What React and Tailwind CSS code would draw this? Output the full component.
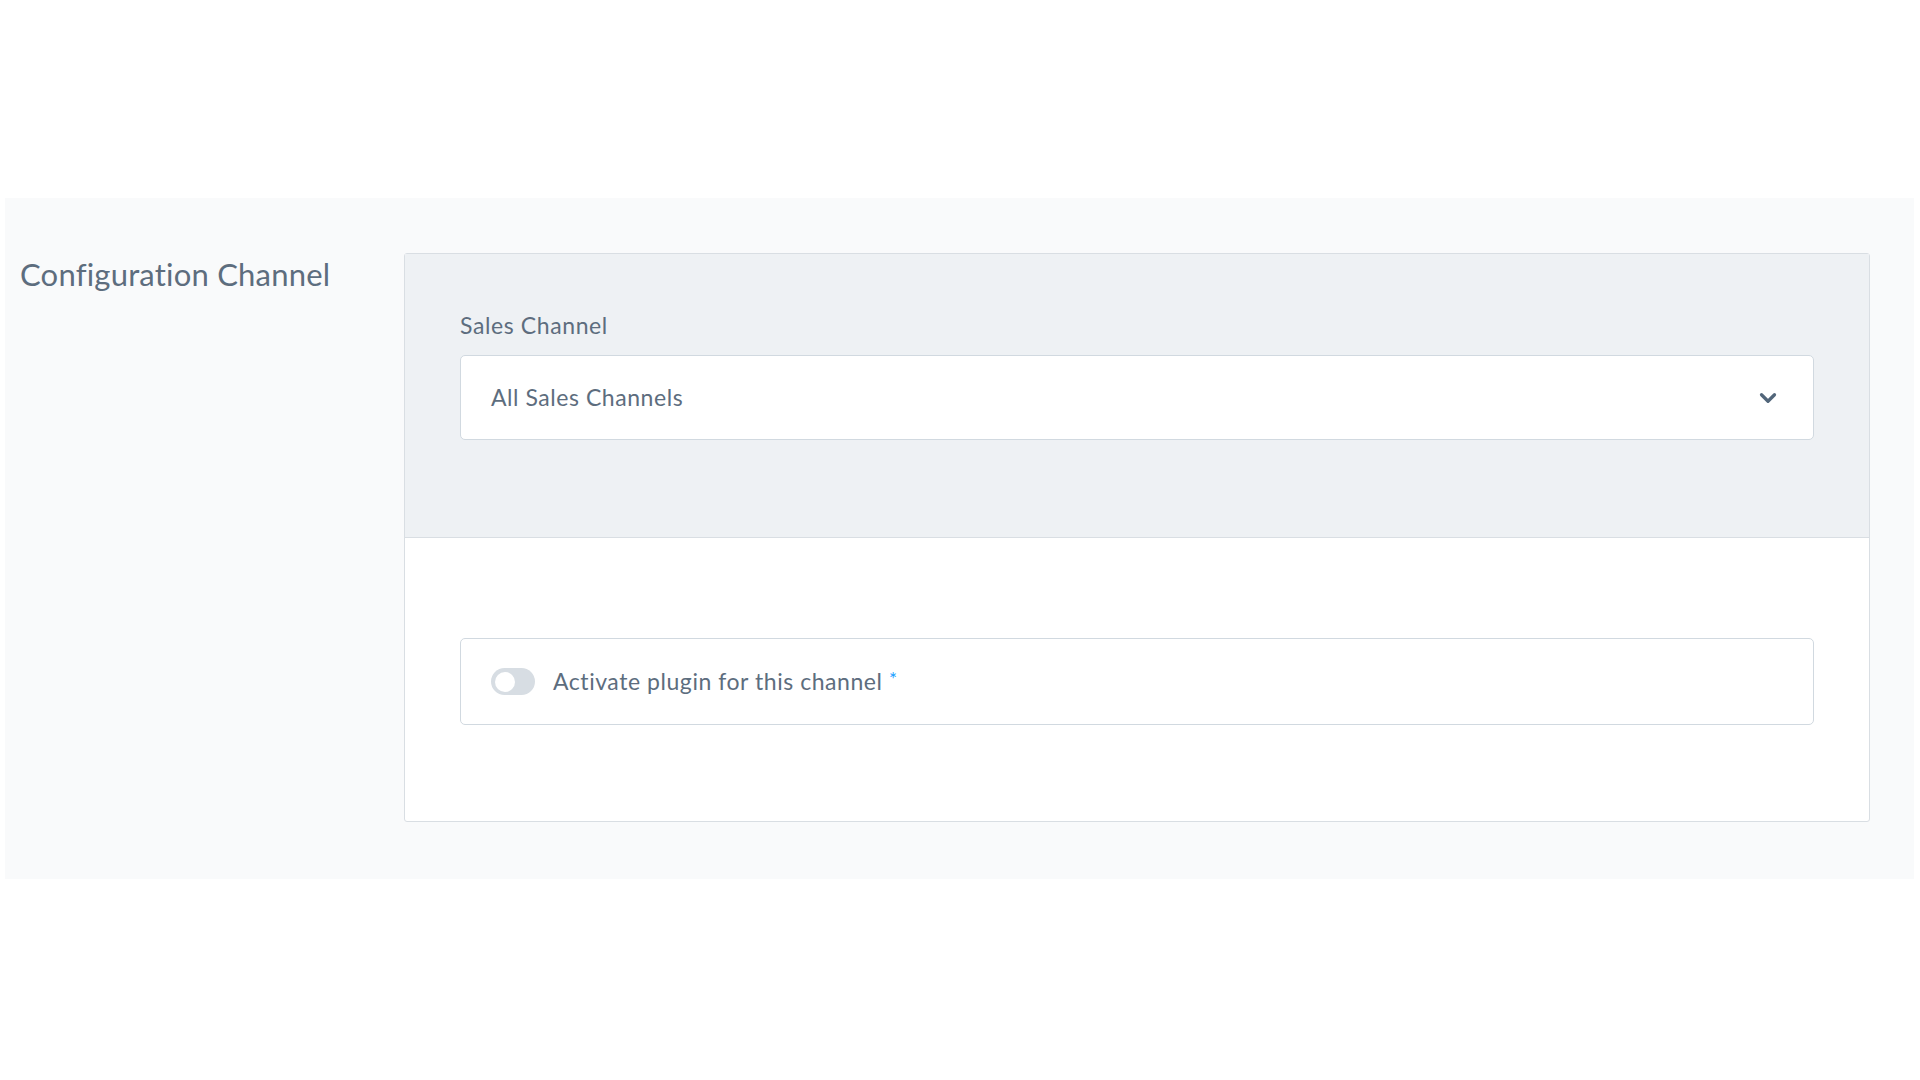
import { ChevronDown } from "lucide-react";

const font = { fontFamily: "Lato, 'Liberation Sans', sans-serif" };

const App = () => {
  return (
    <div className="min-h-screen bg-white pt-[198px] px-[5px]" style={font}>
      <div className="flex w-[1909px] h-[681px] bg-[#f9fafb] pt-[55px]">
        {/* left title */}
        <div className="w-[399px] pl-[15px] pt-[1px]">
          <h2 className="text-[31px] leading-[40px] tracking-[0.2px] text-[#5d6d7e] font-normal">
            Configuration Channel
          </h2>
        </div>

        {/* card */}
        <div className="w-[1466px] h-[569px] border border-[#d9dee3] rounded-[3px] bg-white flex flex-col">
          <div className="bg-[#eef1f4] border-b border-[#d9dee3] px-[55px] pt-[57px] pb-[97px]">
            <label className="block text-[23px] leading-[28px] tracking-[0.6px] text-[#5d6d7e] mb-[16px]">
              Sales Channel
            </label>
            <div className="h-[85px] bg-white border border-[#d1d9e0] rounded-[5px] flex items-center justify-between pl-[30px] pr-[32px]">
              <span className="text-[23px] tracking-[0.55px] text-[#5d6d7e]">All Sales Channels</span>
              <ChevronDown size={26} strokeWidth={3} className="text-[#52667a]" />
            </div>
          </div>

          <div className="flex-1 px-[55px] pt-[100px]">
            <div className="h-[87px] border border-[#d1d9e0] rounded-[5px] flex items-center pl-[30px] gap-[18px]">
              <div className="w-[44px] h-[27px] rounded-full bg-[#d7dde3] flex items-center pl-[4px]">
                <div className="w-[20px] h-[20px] rounded-full bg-white"></div>
              </div>
              <span className="text-[23px] tracking-[0.55px] text-[#5d6d7e]">
                Activate plugin for this channel{" "}
                <span className="text-[#189eff] text-[19px] align-[4px]">*</span>
              </span>
            </div>
          </div>
        </div>
      </div>
    </div>
  );
};

export default App;
